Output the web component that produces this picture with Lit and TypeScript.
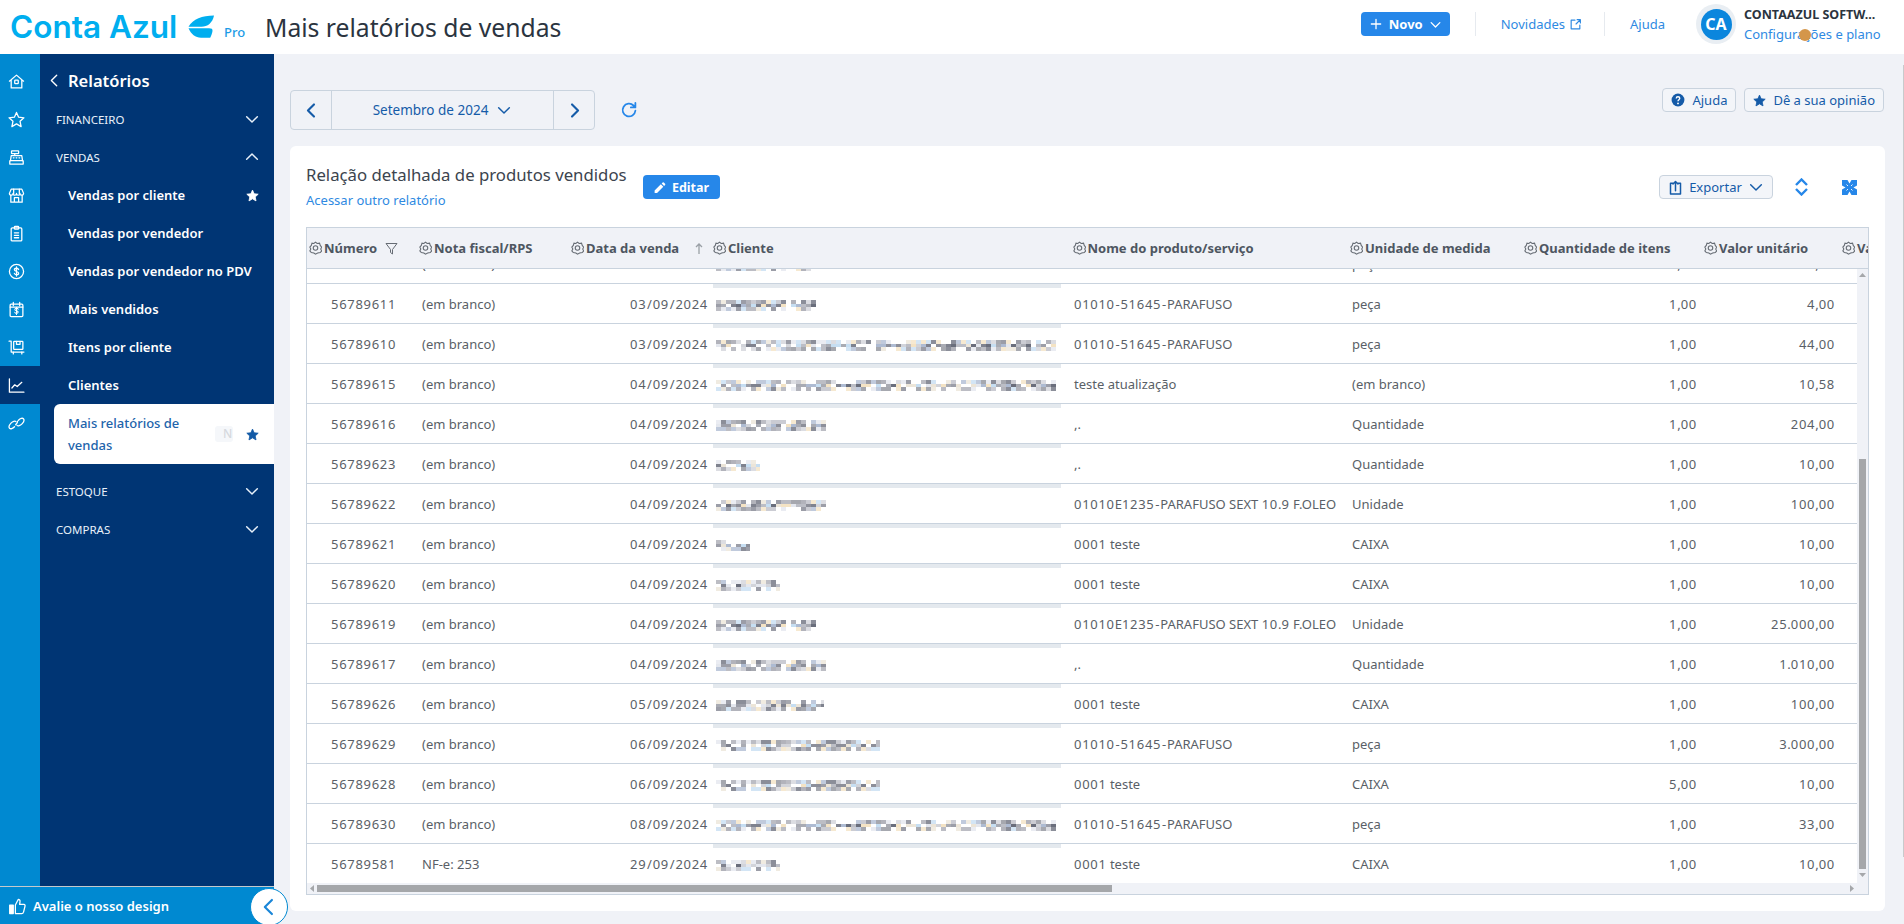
import { LitElement, html, css, svg } from "lit";
import { customElement } from "lit/decorators.js";

const stroke = (body: unknown, size = 16, sw = 1.8) => html`<svg class="ic" width=${size} height=${size} viewBox="0 0 24 24" fill="none" stroke="currentColor" stroke-width=${sw} stroke-linecap="round" stroke-linejoin="round">${body}</svg>`;
const chevDown = (size = 16, sw = 2.2) => stroke(svg`<path d="M4 8.500l8 8 8-8"/>`, size, sw);
const chevUp = (size = 16, sw = 2.2) => stroke(svg`<path d="M4 15.500l8-8 8 8"/>`, size, sw);
const chevLeft = (size = 16, sw = 2.2) => stroke(svg`<path d="M15.500 3.500L7 12l8.500 8.500"/>`, size, sw);
const chevRight = (size = 16, sw = 2.2) => stroke(svg`<path d="M8.500 3.500L17 12l-8.500 8.500"/>`, size, sw);
const starPts = "12,2 15,8.8 22.5,9.6 17,14.6 18.5,22 12,18.2 5.5,22 7,14.6 1.5,9.6 9,8.8";
const starFill = (size = 13) => html`<svg class="ic" width=${size} height=${size} viewBox="0 0 24 24" fill="currentColor" stroke="currentColor" stroke-width="1.5" stroke-linejoin="round"><polygon points=${starPts}></polygon></svg>`;

const dollar = svg`<path d="M15 9.200c-.5-1.200-1.600-1.800-3-1.800-1.700 0-3 .9-3 2.300 0 3 6 1.600 6 4.600 0 1.400-1.300 2.300-3 2.300-1.500 0-2.600-.7-3-1.900M12 5.600v12.800"/>`;
const railIcons = [
  svg`<path d="M2 11.500L12 3l10 8.500M4.500 9.500V21h15V9.500"/><rect x="9.500" y="10" width="5" height="5" rx="1"/>`,
  svg`<polygon points=${starPts}/>`,
  svg`<rect x="5" y="2.500" width="10" height="4" rx=".6"/><path d="M9.500 6.500v3M3.500 16.500l1-7h15l1 7"/><path d="M7.500 12.500h1M11.500 12.500h1M15.500 12.500h1"/><rect x="2.500" y="16.500" width="19" height="5" rx=".8"/>`,
  svg`<path d="M4.500 3h15l2.500 6c0 1.600-1.200 2.600-2.600 2.600s-2.500-1-2.500-2.600c0 1.600-1.100 2.600-2.400 2.600S12 10.600 12 9c0 1.600-1.200 2.600-2.500 2.600S7.100 10.600 7.100 9c0 1.600-1.100 2.600-2.500 2.600S2 10.600 2 9z"/><path d="M4 11.500V21.500h16V11.500M9 21.500v-6.500h6v6.500M8 3v6M16 3v6"/>`,
  svg`<rect x="4.500" y="4" width="15" height="18.500" rx="1.500"/><rect x="9" y="1.800" width="6" height="4" rx="1"/><path d="M9 11h6M9 14.500h6M9 18h6"/>`,
  svg`<circle cx="12" cy="12" r="10"/>${dollar}`,
  svg`<rect x="3" y="4.500" width="18" height="17.500" rx="1.500"/><path d="M7.500 2v4.500M16.500 2v4.500M3 8.500h18"/><g transform="translate(2.400 4.200) scale(.8)">${dollar}</g>`,
  svg`<path d="M1.500 3H4.500V18.500H22.500"/><rect x="8" y="3.500" width="13" height="11" rx=".8"/><path d="M12 3.500v4h5v-4M7.500 18.500v2.500M19.500 18.500v2.500"/>`,
  svg`<path d="M2 2.500V21.500H22.500"/><path d="M5.500 15.500l4-4.500 3.500 2.500 6.500-6"/>`,
  svg`<path d="M9.200 16.600c-2.500 2.700-5.600 3.500-7 2.100-1.300-1.400-.5-4.500 2-7.200 2.600-2.700 5.700-3.500 7-2.100"/><path d="M14.800 7.400c2.500-2.700 5.600-3.500 7-2.100 1.300 1.400.5 4.500-2 7.200-2.600 2.700-5.700 3.500-7 2.100"/><path d="M10.800 13.800c1.500-1.700 2.800-3 2.800-5"/>`,
];

const gear = () => html`<svg class="gear" width="13" height="14" viewBox="0 0 24 26" fill="none" stroke="currentColor" stroke-width="2"><path d="M12 2l3 2.500 4.500-.6 1.300 4.300 2.700 3.300-1.800 3.500 1.800 3.500-2.700 3-4.800.7L12 24.500 9 22.200l-4.800-.7-2.700-3 1.800-3.500-1.800-3.500 2.700-3.300 1.300-4.300L9 4.500z"/><circle cx="12" cy="13" r="4.200"/></svg>`;

/* Digits and separators run wider in the reference's font than in Noto Sans. */
const wide = (s: string) => html`<span>${s.split(/([0-9]+|[\/-])/).map((p) =>
  /^[0-9]+$/.test(p) ? html`<span class="dg">${p}</span>`
    : /^[\/-]$/.test(p) ? html`<span class="sep">${p}</span>`
    : p)}</span>`;

function mosaic(seed: number, width: number) {
  const pal = ["#7f828e", "#8d8f99", "#9c9ea8", "#a9abb3", "#bcbec6", "#d2d4da", "#ece5d8", "#f4e3c4", "#c6def2", "#aebbd2", "#e4e7ee", "#ffffff", "#6a6e7c", "#ffffff"];
  let s = seed * 7919 + 13;
  const next = () => { s = (s * 1103515245 + 12345) & 0x7fffffff; return s; };
  const w = 5, h = 3.7;
  const cells: unknown[] = [];
  const cols = Math.round(width / w);
  for (let r = 0; r < 3; r++) {
    for (let c = 0; c < cols; c++) {
      const n = next() >> 8;
      if (n % 13 === 0) continue;
      const col = pal[(n >> 3) % pal.length];
      const op = r === 1 ? 1 : 0.78;
      cells.push(svg`<rect x=${c * w} y=${(r * h).toFixed(1)} width=${w} height=${h} fill=${col} opacity=${op}/>`);
    }
  }
  return html`<svg class="mosaic" width=${width} height="11" viewBox="0 0 ${width} 11" shape-rendering="crispEdges">${cells}</svg>`;
}

type Row = [string, string, string, number, number, string, string, string, string];
const rows: Row[] = [
  ["56789612", "(em branco)", "03/09/2024", 1, 100, "", "peça", "1,00", "4,00"],
  ["56789611", "(em branco)", "03/09/2024", 1, 100, "01010-51645-PARAFUSO", "peça", "1,00", "4,00"],
  ["56789610", "(em branco)", "03/09/2024", 2, 340, "01010-51645-PARAFUSO", "peça", "1,00", "44,00"],
  ["56789615", "(em branco)", "04/09/2024", 3, 340, "teste atualização", "(em branco)", "1,00", "10,58"],
  ["56789616", "(em branco)", "04/09/2024", 4, 112, ",.", "Quantidade", "1,00", "204,00"],
  ["56789623", "(em branco)", "04/09/2024", 5, 44, ",.", "Quantidade", "1,00", "10,00"],
  ["56789622", "(em branco)", "04/09/2024", 6, 110, "01010E1235-PARAFUSO SEXT 10.9 F.OLEO", "Unidade", "1,00", "100,00"],
  ["56789621", "(em branco)", "04/09/2024", 7, 34, "0001 teste", "CAIXA", "1,00", "10,00"],
  ["56789620", "(em branco)", "04/09/2024", 8, 64, "0001 teste", "CAIXA", "1,00", "10,00"],
  ["56789619", "(em branco)", "04/09/2024", 1, 100, "01010E1235-PARAFUSO SEXT 10.9 F.OLEO", "Unidade", "1,00", "25.000,00"],
  ["56789617", "(em branco)", "04/09/2024", 4, 112, ",.", "Quantidade", "1,00", "1.010,00"],
  ["56789626", "(em branco)", "05/09/2024", 9, 108, "0001 teste", "CAIXA", "1,00", "100,00"],
  ["56789629", "(em branco)", "06/09/2024", 10, 164, "01010-51645-PARAFUSO", "peça", "1,00", "3.000,00"],
  ["56789628", "(em branco)", "06/09/2024", 10, 164, "0001 teste", "CAIXA", "5,00", "10,00"],
  ["56789630", "(em branco)", "08/09/2024", 3, 340, "01010-51645-PARAFUSO", "peça", "1,00", "33,00"],
  ["56789581", "NF-e: 253", "29/09/2024", 8, 64, "0001 teste", "CAIXA", "1,00", "10,00"],
];

const headers = ["Número", "Nota fiscal/RPS", "Data da venda", "Cliente", "Nome do produto/serviço", "Unidade de medida", "Quantidade de itens", "Valor unitário", "Va"];

@customElement("app-root")
export class AppRoot extends LitElement {
  static styles = css`
    :host { display: block; width: 1904px; height: 924px; overflow: hidden; position: relative; background: #f0f2f7; font-family: "Noto Sans", "Open Sans", sans-serif; color: #4d5560; font-size: 13px; }
    * { box-sizing: border-box; }
    svg { display: block; flex: none; }
    a { text-decoration: none; color: inherit; }

    header { height: 54px; background: #fff; display: flex; align-items: center; padding: 0 19px 0 10px; }
    .logo { font-family: "Inter", sans-serif; font-weight: 600; font-size: 31.500px; color: #00aeef; letter-spacing: 0; line-height: 1; width: 178px; white-space: nowrap; }
    .pro { font-size: 13px; color: #1c9be6; margin: 10px 0 0 10px; width: 21px; font-weight: 500; }
    h1 { font-size: 24.700px; font-weight: 400; margin: 0 0 0 20px; color: #2b3440; white-space: nowrap; }
    .hright { margin: 0 0 6px auto; display: flex; align-items: center; }
    .novo { width: 89px; height: 24px; border-radius: 4px; background: #2687e9; color: #fff; display: flex; align-items: center; justify-content: center; gap: 6px; font-weight: 700; font-size: 13px; }
    .vsep { width: 1px; height: 24px; background: #e6eaef; margin: 0 25px; }
    .vsep.b { margin: 0 25px 0 22px; }
    .hlink { color: #2f8ae2; font-size: 13px; display: flex; align-items: center; gap: 4px; }
    .avatar { width: 40px; height: 40px; border-radius: 50%; background: #e9eef3; display: flex; align-items: center; justify-content: center; margin-left: 31px; }
    .avatar span { width: 31px; height: 31px; border-radius: 50%; background: #0b86dd; color: #fff; font-weight: 700; font-size: 16px; display: flex; align-items: center; justify-content: center; }
    .user { margin-left: 8px; width: 141px; display: flex; flex-direction: column; gap: 2px; position: relative; }
    .uname { font-weight: 700; font-size: 12.500px; color: #2b3440; line-height: 17px; white-space: nowrap; }
    .cfg { color: #2f8ae2; font-size: 13px; line-height: 18px; white-space: nowrap; }
    .dot { position: absolute; width: 12px; height: 12px; border-radius: 50%; background: #d4964a; left: 55px; top: 23px; }

    .body { display: flex; height: 870px; }
    aside { width: 274px; display: flex; flex-wrap: wrap; align-content: flex-start; position: relative; }
    .rail { width: 40px; height: 832px; background: #0089d1; padding-top: 8px; color: #fff; }
    .rail div { height: 38px; padding-left: 8px; display: flex; align-items: center; }
    .rail div.on { background: #003574; }
    .panel { width: 234px; height: 832px; background: #003574; color: #fff; padding-top: 7px; }
    .back { height: 39px; display: flex; align-items: center; padding-left: 7px; gap: 6px; font-size: 16.500px; font-weight: 600; }
    .group { height: 38px; display: flex; align-items: center; justify-content: space-between; padding: 0 14px 0 16px; font-size: 11.500px; color: #e8f1fa; }
    .item { height: 38px; display: flex; align-items: center; justify-content: space-between; padding: 0 15px 0 28px; font-size: 13px; font-weight: 600; }
    .item.active { height: 60px; margin: 0 0 8px 14px; padding-left: 14px; background: #fff; border-radius: 6px 0 0 6px; color: #2264ab; font-weight: 500; }
    .item.active .lbl { width: 146px; line-height: 22px; }
    .pill { width: 18px; height: 16px; background: #f5f7fa; border-radius: 3px; color: #d5d9de; font-size: 12px; line-height: 16px; padding-left: 8px; overflow: hidden; margin-left: auto; margin-right: 13px; }
    .active .star { color: #125aa6; }
    .foot { width: 274px; height: 38px; background: #0089d1; border-top: 1px solid #c5c9cc; color: #fff; display: flex; align-items: center; padding: 1px 0 0 9px; gap: 7px; font-weight: 600; font-size: 13px; }
    .circle { position: absolute; left: 250px; bottom: -2px; width: 38px; height: 38px; border-radius: 50%; background: #fff; border: 1.500px solid #0089d1; color: #1a86d8; display: flex; align-items: center; justify-content: center; z-index: 2; }

    main { flex: 1; padding: 36px 19px 0 16px; min-width: 0; }
    .bar { display: flex; align-items: flex-start; height: 40px; margin-bottom: 16px; }
    .date { width: 305px; height: 40px; display: flex; border: 1px solid #c9d3de; border-radius: 4px; color: #155ba8; }
    .date > div { display: flex; align-items: center; justify-content: center; }
    .date .nav { width: 40px; }
    .date .dmid { flex: 1; border-left: 1px solid #c9d3de; border-right: 1px solid #c9d3de; gap: 8px; font-size: 13.500px; }
    .refresh { margin: 11px 0 0 25px; color: #2687e9; }
    .tools { margin: -2px 1px 0 auto; display: flex; gap: 8px; }
    .ghost { height: 24px; display: flex; align-items: center; gap: 7px; border: 1px solid #c9d3de; border-radius: 4px; background: #f3f5f9; color: #155ba8; padding: 0 8px; font-size: 13px; white-space: nowrap; }

    .card { background: #fff; border-radius: 6px; width: 1595px; height: 765px; padding: 0 16px; }
    .head { height: 81px; display: flex; align-items: flex-start; }
    .tt { padding-top: 18px; }
    h2 { font-size: 16.750px; line-height: 22px; font-weight: 400; color: #3c444e; margin: 0 0 6px; white-space: nowrap; }
    .acc { color: #2f8ae2; font-size: 13px; line-height: 17px; display: block; }
    .edit { margin: 29px 0 0 16px; width: 77px; height: 24px; border-radius: 4px; background: #2687e9; color: #fff; font-weight: 700; font-size: 12.500px; display: flex; align-items: center; justify-content: center; gap: 6px; }
    .hr { margin: 29px 8px 0 auto; display: flex; align-items: center; }
    .export { width: 114px; justify-content: center; background: #f3f5f9; gap: 6px; }
    .ib { width: 24px; height: 24px; display: flex; align-items: center; justify-content: center; color: #2687e9; margin-left: 16px; }
    .ib + .ib { margin-left: 24px; }

    .table { height: 668px; border: 1px solid #c9d3de; overflow: hidden; width: 1563px; }
    .thead { height: 41px; background: #f0f2f7; border-bottom: 1px solid #c9d3de; display: grid; grid-template-columns: 110px 152px 142px 359.500px 277.500px 174px 180px 138px 28px; overflow: hidden; }
    .th { display: flex; align-items: center; gap: 2px; padding-left: 2px; font-weight: 700; font-size: 13px; color: #4e5661; white-space: nowrap; }
    .th .gear { color: #666c74; }
    .th .sp { color: #666c74; margin-left: 6px; }
    .th .sort { color: #9aa0a6; margin-left: 14px; }
    .tbody { display: flex; height: 614px; }
    .rows { width: 1550px; height: 614px; overflow: hidden; }
    .row { height: 40px; border-bottom: 1px solid #c9d3de; display: grid; grid-template-columns: 115px 152px 139px 348px 291px 175px 180px 138px 12px; align-items: center; font-size: 13px; color: #5a5f67; white-space: nowrap; }
    .row:first-child { margin-top: -25px; }
    .row > div { height: 100%; display: flex; align-items: center; }
    .dg { letter-spacing: .7px; }
    .sep { margin: 0 .8px; }
    .c1 { padding-left: 24px; }
    .c3 { justify-content: flex-end; padding-right: 5px; }
    .c4 { padding-left: 3px; border-top: 4px solid #e4e9ee; margin-top: -1px; }
    .c5 { padding-left: 13px; }
    .num { justify-content: flex-end; padding-right: 10px; }
    .vs { width: 11px; background: #f0f2f7; height: 614px; display: flex; flex-direction: column; align-items: center; }
    .arr { height: 12px; flex: none; display: flex; align-items: center; justify-content: center; color: #a5a7aa; }
    .vthumb { width: 7px; height: 410px; background: #a5a7aa; margin-top: 178px; }
    .hs { height: 11px; background: #f0f2f7; display: flex; align-items: center; }
    .hthumb { width: 795px; height: 7px; background: #a5a7aa; }
    .corner { margin-left: auto; margin-right: 14px; }
    .pagebar { position: absolute; right: 0; top: 65px; height: 792px; width: 1px; background: #c8cacc; }
  `;

  render() {
    return html`
      <header>
        <div class="logo">Conta Azul</div>
        <svg width="26" height="24" viewBox="0 0 26 24" fill="#00aeef"><path d="M26 .5C14 .5 5 4 .5 11.800h13C19.500 11.800 24.500 8 26 .5z"/><path d="M.5 13.300h20.500c2.500 0 3.800.7 3.500 2.800-.3 2.300-1.300 4.800-2.300 6.700H13C7.500 22.800 3 19 .5 13.300z"/></svg>
        <span class="pro">Pro</span>
        <h1>Mais relatórios de vendas</h1>
        <div class="hright">
          <a class="novo">${stroke(svg`<path d="M12 4v16M4 12h16"/>`, 14, 2.2)}<span>Novo</span>${chevDown(13, 2.4)}</a>
          <span class="vsep"></span>
          <a class="hlink">Novidades ${stroke(svg`<path d="M11 4H4v16h16v-7M13 11l8-8M15 3h6v6"/>`, 13, 2.2)}</a>
          <span class="vsep b"></span>
          <a class="hlink">Ajuda</a>
          <div class="avatar"><span>CA</span></div>
          <div class="user">
            <span class="uname">CONTAAZUL SOFTW...</span>
            <a class="cfg">Configurações e plano</a>
            <i class="dot"></i>
          </div>
        </div>
      </header>
      <div class="body">
        <aside>
          <nav class="rail">
            ${railIcons.map((b, i) => html`<div class=${i === 8 ? "on" : ""}>${stroke(b, 17)}</div>`)}
          </nav>
          <nav class="panel">
            <div class="back">${chevLeft(15)}<span>Relatórios</span></div>
            <div class="group"><span>FINANCEIRO</span>${chevDown()}</div>
            <div class="group"><span>VENDAS</span>${chevUp()}</div>
            <div class="item"><span>Vendas por cliente</span>${starFill()}</div>
            <div class="item"><span>Vendas por vendedor</span></div>
            <div class="item"><span>Vendas por vendedor no PDV</span></div>
            <div class="item"><span>Mais vendidos</span></div>
            <div class="item"><span>Itens por cliente</span></div>
            <div class="item"><span>Clientes</span></div>
            <div class="item active"><span class="lbl">Mais relatórios de vendas</span><span class="pill">N</span><span class="star">${starFill()}</span></div>
            <div class="group"><span>ESTOQUE</span>${chevDown()}</div>
            <div class="group"><span>COMPRAS</span>${chevDown()}</div>
          </nav>
          <div class="foot">
            <svg width="17" height="17" viewBox="0 0 24 24" fill="none" stroke="currentColor" stroke-width="1.800" stroke-linejoin="round"><rect x="1" y="10" width="5" height="12" fill="currentColor"/><path d="M9 10l4-8c2 0 3 1.500 2.500 3.500L15 9h6c1.500 0 2 1.500 1.500 3l-2 8c-.4 1.300-1.200 2-2.500 2H9z"/></svg>
            <span>Avalie o nosso design</span>
          </div>
          <div class="circle">${chevLeft(20, 2.6)}</div>
        </aside>
        <main>
          <div class="bar">
            <div class="date">
              <div class="nav">${chevLeft(17, 3)}</div>
              <div class="dmid"><span>Setembro de 2024</span>${chevDown()}</div>
              <div class="nav">${chevRight(17, 3)}</div>
            </div>
            <div class="refresh">${stroke(svg`<path d="M20.500 13a8.500 8.500 0 1 1-2.500-7l2.500 2.500M20.500 2.500v6h-6"/>`, 18, 2.4)}</div>
            <div class="tools">
              <a class="ghost"><svg width="14" height="14" viewBox="0 0 24 24"><circle cx="12" cy="12" r="11" fill="#155ba8"/><path d="M9 9.500C9 7.500 10.300 6.500 12 6.500s3 1 3 2.700c0 2.500-3 2.500-3 5" fill="none" stroke="#fff" stroke-width="2.400"/><circle cx="12" cy="17.800" r="1.600" fill="#fff"/></svg><span>Ajuda</span></a>
              <a class="ghost">${starFill(13)}<span>Dê a sua opinião</span></a>
            </div>
          </div>
          <section class="card">
            <div class="head">
              <div class="tt">
                <h2>Relação detalhada de produtos vendidos</h2>
                <a class="acc">Acessar outro relatório</a>
              </div>
              <a class="edit"><svg width="13" height="13" viewBox="0 0 24 24" fill="currentColor"><path d="M3 17.500V22h4.500L19 10.500 14.500 6zM16 4.500L20.500 9l1.800-1.800a1.500 1.500 0 0 0 0-2.100l-2.400-2.400a1.500 1.500 0 0 0-2.100 0z"/></svg><span>Editar</span></a>
              <div class="hr">
                <a class="ghost export">${stroke(svg`<path d="M8 5H4v17.500h16V5h-4M12 17V2.500M8 6.500l4-4 4 4"/>`, 15, 2.4)}<span>Exportar</span>${chevDown()}</a>
                <a class="ib"><svg width="13" height="18" viewBox="0 0 13 18" fill="none" stroke="currentColor" stroke-width="2.400"><path d="M1 7l5.500-5.500L12 7M1 11l5.500 5.500L12 11"/></svg></a>
                <a class="ib"><svg width="15" height="15" viewBox="0 0 15 15" fill="currentColor"><rect width="15" height="15"/><path d="M7.500 3.500L5.500 0h4zM7.500 11.500L5.500 15h4zM3.500 7.500L0 5.500v4zM11.500 7.500L15 5.500v4z" fill="#fff"/><path d="M4.500 4.500l1.500 1.500M10.500 4.500L9 6M4.500 10.500L6 9M10.500 10.500L9 9" stroke="#fff" stroke-width=".9"/></svg></a>
              </div>
            </div>
            <div class="table">
              <div class="thead">
                ${headers.map((h, i) => html`<div class="th">${gear()}<span>${h}</span>
                  ${i === 0 ? html`<svg class="sp" width="13" height="13" viewBox="0 0 13 13" fill="none" stroke="currentColor"><path d="M1 1.500h11L7.500 7.500v4.500l-2-1.500v-3z"/></svg>` : ""}
                  ${i === 2 ? html`<svg class="sort" width="8" height="11" viewBox="0 0 8 11" fill="none" stroke="currentColor" stroke-width="1.300"><path d="M4 11V1M1 4l3-3 3 3"/></svg>` : ""}
                </div>`)}
              </div>
              <div class="tbody">
                <div class="rows">
                  ${rows.map((r) => html`<div class="row">
                    <div class="c1">${wide(r[0])}</div>
                    <div>${r[1]}</div>
                    <div class="c3">${wide(r[2])}</div>
                    <div class="c4">${mosaic(r[3], r[4])}</div>
                    <div class="c5">${wide(r[5])}</div>
                    <div>${r[6]}</div>
                    <div class="num">${wide(r[7])}</div>
                    <div class="num">${wide(r[8])}</div>
                  </div>`)}
                </div>
                <div class="vs">
                  <div class="arr"><svg width="7" height="4" viewBox="0 0 7 4" fill="currentColor"><path d="M3.500 0L7 4H0z"/></svg></div>
                  <div class="vthumb"></div>
                  <div class="arr"><svg width="7" height="4" viewBox="0 0 7 4" fill="currentColor"><path d="M3.500 4L7 0H0z"/></svg></div>
                </div>
              </div>
              <div class="hs">
                <svg style="margin:0 3px" width="4" height="7" viewBox="0 0 4 7" fill="#a5a7aa"><path d="M0 3.500L4 0v7z"/></svg>
                <div class="hthumb"></div>
                <svg class="corner" width="4" height="7" viewBox="0 0 4 7" fill="#a5a7aa"><path d="M4 3.500L0 0v7z"/></svg>
              </div>
            </div>
          </section>
        </main>
      </div>
      <div class="pagebar"></div>
    `;
  }
}
